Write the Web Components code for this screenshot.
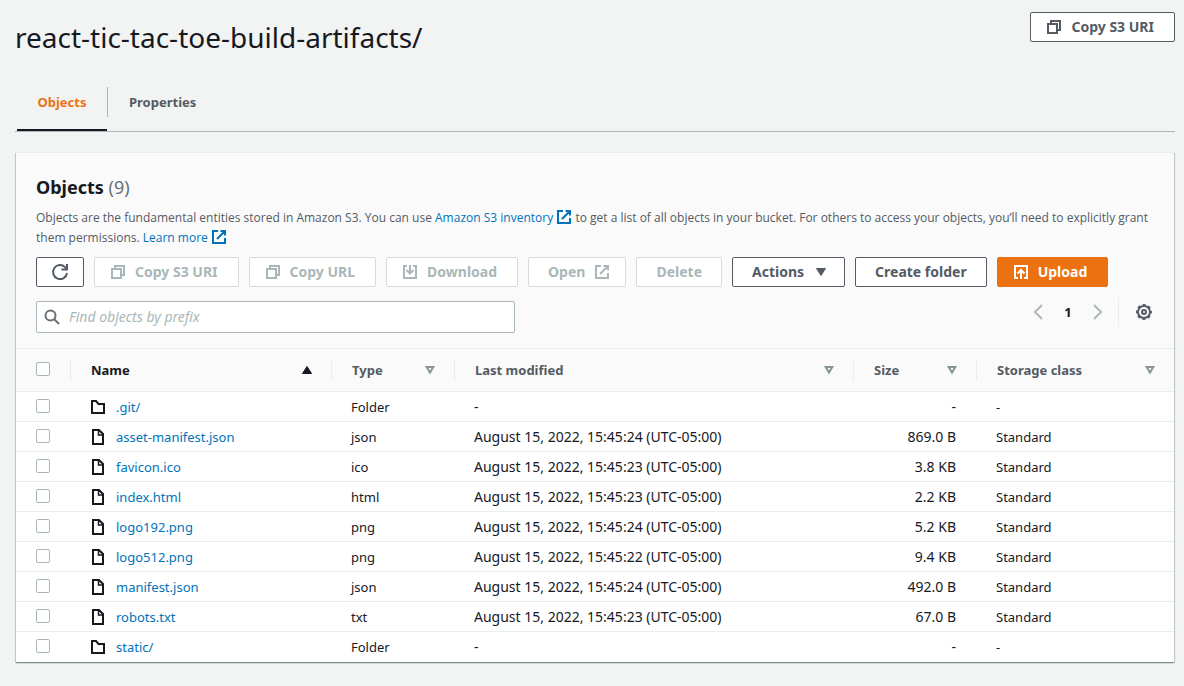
<!DOCTYPE html>
<html lang="en">
<head>
<meta charset="utf-8">
<meta name="viewport" content="width=device-width, initial-scale=1">
<title>react-tic-tac-toe-build-artifacts/</title>
<style>
  body {
    margin: 0;
    background: #f2f3f3;
    color: #16191f;
    font: 13px/20px "Noto Sans", "Open Sans", sans-serif;
    --link: #0073bb;
    --muted: #545b64;
    --line: #eaeded;
    --disabled: #aab7b8;
  }
</style>
</head>
<body>
<s3-folder-page></s3-folder-page>

<script>
const ICONS = {
  copy: '<path d="M2 5h9v9H2z"/><path d="M5 5V2h9v9h-3"/>',
  external: '<path d="M9.500 2H14v4.500M6 10l8-8M14 9v5H2V2h5"/>',
  refresh: '<path d="M15 9a7 7 0 1 1-2-5.900l2 1.900"/><path d="M15 0v5.500H9.500"/>',
  download: '<path d="M5 2H2v12h12V2h-3M8 1v8M4.500 6L8 9.500 11.500 6"/>',
  upload: '<path d="M5 14H2V2h12v12h-3M8 15V6M4.500 9.500L8 6l3.500 3.500"/>',
  caret: '<path d="M3.500 4.500h9L8 11.500z" fill="currentColor" stroke-width="1" stroke-linejoin="round"/>',
  search: '<circle cx="6.500" cy="6.500" r="5"/><path d="M10 10l5 5"/>',
  prev: '<path d="M12 1L5 8l7 7"/>',
  next: '<path d="M4 1l7 7-7 7"/>',
  gear: '<circle cx="8" cy="8" r="6"/><circle cx="8" cy="8" r="2"/><circle cx="8" cy="8" r="7.200" stroke-width="1.600" stroke-dasharray="3 2.655" stroke-dashoffset="1.500"/>',
  sorted: '<path d="M3.500 11.500h9L8 4.500z" fill="currentColor" stroke-width="1" stroke-linejoin="round"/>',
  sortable: '<path d="M4.700 5h6.600L8 10.500z" stroke-linejoin="miter"/>',
  file: '<path d="M3 1h6l4 4v10H3z"/><path d="M8.500 1v5H13" stroke-width="1.500"/>',
  folder: '<path d="M2 14V2h4l2.500 3H14v9z"/>'
};

class S3Icon extends HTMLElement {
  connectedCallback() {
    const root = this.shadowRoot || this.attachShadow({ mode: 'open' });
    root.innerHTML = `
      <style>
        :host { display: inline-block; flex: none; width: 16px; height: 16px; }
        svg { display: block; width: 100%; height: 100%; fill: none; stroke: currentColor; stroke-width: 2; overflow: visible; }
      </style>
      <svg viewBox="0 0 16 16" aria-hidden="true">${ICONS[this.getAttribute('name')]}</svg>`;
  }
}
customElements.define('s3-icon', S3Icon);

class S3Button extends HTMLElement {
  connectedCallback() {
    const root = this.shadowRoot || this.attachShadow({ mode: 'open' });
    const icon = this.getAttribute('icon');
    const iconEnd = this.getAttribute('icon-end');
    const label = this.getAttribute('label');
    root.innerHTML = `
      <style>
        :host { display: inline-block; flex: none; }
        button {
          box-sizing: border-box; display: flex; align-items: center; justify-content: center;
          gap: 9px; height: 30px; margin: 0; padding: 0 19px; white-space: nowrap;
          border: 1px solid var(--muted); border-radius: 2px; background: #fff;
          color: var(--muted); font: inherit; font-size: 14px; font-weight: 700; cursor: pointer;
        }
        .lead { padding: 0 20px 0 15px; }
        .trail { padding-right: 15px; }
        .only { padding: 0 15px; }
        button:disabled { color: var(--disabled); border-color: #d5dbdb; cursor: default; }
        :host([variant="primary"]) button { background: #ec7211; border-color: #ec7211; color: #fff; }
      </style>
      <button type="button" class="${label ? 'only' : icon ? 'lead' : iconEnd ? 'trail' : ''}"
        ${label ? `aria-label="${label}"` : ''} ${this.hasAttribute('disabled') ? 'disabled' : ''}>
        ${icon ? `<s3-icon name="${icon}"></s3-icon>` : ''}${label ? '' : '<slot></slot>'}${iconEnd ? `<s3-icon name="${iconEnd}"></s3-icon>` : ''}
      </button>`;
  }
}
customElements.define('s3-button', S3Button);

class S3Link extends HTMLElement {
  connectedCallback() {
    const root = this.shadowRoot || this.attachShadow({ mode: 'open' });
    root.innerHTML = `
      <style>
        :host { display: inline; }
        a { color: var(--link); text-decoration: none; }
        a:hover { text-decoration: underline; }
        s3-icon { vertical-align: -3px; }
      </style>
      <a href="${this.getAttribute('href') || '#'}"><slot></slot>${this.hasAttribute('external') ? ' <s3-icon name="external"></s3-icon>' : ''}</a>`;
  }
}
customElements.define('s3-link', S3Link);

class S3Tabs extends HTMLElement {
  connectedCallback() {
    const root = this.shadowRoot || this.attachShadow({ mode: 'open' });
    root.innerHTML = `
      <style>
        :host { display: block; border-bottom: 1px solid var(--disabled); }
        div { display: flex; padding-left: 2px; }
        button {
          height: 44px; margin: 0; padding: 0 20px 12px; border: 0; border-bottom: 2px solid transparent;
          background: none; color: var(--muted); font: inherit; font-weight: 700; cursor: pointer;
        }
        button[aria-selected="true"] { min-width: 90px; color: #ec7211; border-bottom-color: #16191f; }
        i { width: 1px; height: 30px; margin-right: 1px; background: var(--disabled); }
      </style>
      <div role="tablist">
        <button type="button" role="tab" aria-selected="true">Objects</button><i></i>
        <button type="button" role="tab" aria-selected="false">Properties</button>
      </div>`;
  }
}
customElements.define('s3-tabs', S3Tabs);

class S3Search extends HTMLElement {
  connectedCallback() {
    const root = this.shadowRoot || this.attachShadow({ mode: 'open' });
    root.innerHTML = `
      <style>
        :host { display: block; }
        label {
          box-sizing: border-box; display: flex; align-items: center; gap: 9px; height: 32px; padding: 0 7px;
          border: 1px solid var(--disabled); border-radius: 2px; background: #fff; color: #687078;
        }
        input { flex: 1; min-width: 0; padding: 0; border: 0; outline: 0; background: none; color: #16191f; font: inherit; font-size: 14px; }
        input::placeholder { color: var(--disabled); font-style: italic; opacity: 1; }
      </style>
      <label><s3-icon name="search"></s3-icon><input type="search" placeholder="Find objects by prefix" aria-label="Find objects by prefix"></label>`;
  }
}
customElements.define('s3-search', S3Search);

class S3Pagination extends HTMLElement {
  connectedCallback() {
    const root = this.shadowRoot || this.attachShadow({ mode: 'open' });
    root.innerHTML = `
      <style>
        :host { display: flex; align-items: center; height: 30px; }
        button { display: flex; justify-content: center; margin: 0; padding: 0; width: 30px; border: 0; background: none; color: var(--muted); font: inherit; cursor: pointer; }
        button:disabled { color: var(--disabled); }
        .page { color: #16191f; font-weight: 700; }
        .settings { justify-content: flex-start; margin-left: 5px; padding-left: 17px; width: 36px; height: 30px; align-items: center; border-left: 1px solid var(--line); }
      </style>
      <button type="button" disabled aria-label="Previous page"><s3-icon name="prev"></s3-icon></button>
      <button type="button" class="page" aria-current="page">1</button>
      <button type="button" disabled aria-label="Next page"><s3-icon name="next"></s3-icon></button>
      <button type="button" class="settings" aria-label="Preferences"><s3-icon name="gear"></s3-icon></button>`;
  }
}
customElements.define('s3-pagination', S3Pagination);

class S3ObjectsTable extends HTMLElement {
  connectedCallback() {
    const root = this.shadowRoot || this.attachShadow({ mode: 'open' });
    const stamp = s => `August 15, 2022, 15:45:${s} (UTC-05:00)`;
    const rows = [
      ['.git/', 'Folder', '-', '-', '-'],
      ['asset-manifest.json', 'json', stamp(24), '869.0 B', 'Standard'],
      ['favicon.ico', 'ico', stamp(23), '3.8 KB', 'Standard'],
      ['index.html', 'html', stamp(23), '2.2 KB', 'Standard'],
      ['logo192.png', 'png', stamp(24), '5.2 KB', 'Standard'],
      ['logo512.png', 'png', stamp(22), '9.4 KB', 'Standard'],
      ['manifest.json', 'json', stamp(24), '492.0 B', 'Standard'],
      ['robots.txt', 'txt', stamp(23), '67.0 B', 'Standard'],
      ['static/', 'Folder', '-', '-', '-']
    ];
    const heads = ['Name', 'Type', 'Last modified', 'Size', 'Storage class'];
    root.innerHTML = `
      <style>
        :host { display: block; }
        table { width: 100%; table-layout: fixed; border-collapse: separate; border-spacing: 0; }
        .check { width: 55px; } .name { width: 261px; } .short { width: 123px; } .class { width: 197px; }
        th { height: 42px; padding: 0; background: #fafafa; border-bottom: 1px solid var(--line); color: var(--muted); text-align: left; }
        th > div { box-sizing: border-box; display: flex; align-items: center; justify-content: space-between; height: 22px; padding: 0 16px 0 20px; border-right: 1px solid var(--line); }
        th:last-child > div { border-right: 0; }
        th[aria-sort] { color: #16191f; }
        th s3-icon { color: #879596; }
        th[aria-sort] s3-icon { color: #16191f; }
        td { height: 29px; padding: 0 20px; background: #fff; border-bottom: 1px solid var(--line); white-space: nowrap; }
        td + td { padding: 0 21px 0 19px; }
        tr:last-child td { border-bottom-color: #fff; }
        .figure { font-size: 14px; }
        .size { text-align: right; }
        .object { display: flex; align-items: center; gap: 10px; }
        input { appearance: none; box-sizing: border-box; display: block; width: 14px; height: 14px; margin: 0 0 2px; border: 1px solid var(--disabled); border-radius: 2px; background: #fff; }
        input:checked { background: var(--link); }
      </style>
      <table>
        <colgroup><col class="check"><col class="name"><col class="short"><col><col class="short"><col class="class"></colgroup>
        <thead><tr>
          <th scope="col"><div><input type="checkbox" aria-label="Select all objects"></div></th>
          ${heads.map((h, i) => `<th scope="col" ${i ? '' : 'aria-sort="ascending"'}><div>${h}<s3-icon name="${i ? 'sortable' : 'sorted'}"></s3-icon></div></th>`).join('')}
        </tr></thead>
        <tbody>${rows.map(([name, type, date, size, storage]) => `
          <tr>
            <td><input type="checkbox" aria-label="Select ${name}"></td>
            <td><div class="object"><s3-icon name="${type === 'Folder' ? 'folder' : 'file'}"></s3-icon><s3-link href="#${name}">${name}</s3-link></div></td>
            <td>${type}</td><td class="figure">${date}</td><td class="figure size">${size}</td><td>${storage}</td>
          </tr>`).join('')}
        </tbody>
      </table>`;
  }
}
customElements.define('s3-objects-table', S3ObjectsTable);

class S3Panel extends HTMLElement {
  connectedCallback() {
    const root = this.shadowRoot || this.attachShadow({ mode: 'open' });
    root.innerHTML = `
      <style>
        :host { display: block; background: #fff; border-top: 1px solid var(--line); box-shadow: 0 1px 1px 0 rgba(0,28,36,.3), 1px 1px 1px 0 rgba(0,28,36,.15), -1px 1px 1px 0 rgba(0,28,36,.15); }
        header { padding: 20px 20px 15px; background: #fafafa; border-bottom: 1px solid var(--line); }
      </style>
      <header><slot name="header"></slot></header>
      <slot></slot>`;
  }
}
customElements.define('s3-panel', S3Panel);

class S3FolderPage extends HTMLElement {
  connectedCallback() {
    const root = this.shadowRoot || this.attachShadow({ mode: 'open' });
    root.innerHTML = `
      <style>
        :host { display: block; padding: 12px 9px 24px 15px; }
        .title { display: flex; align-items: flex-start; justify-content: space-between; height: 75px; }
        h1 { margin: 7px 0 0; font-size: 28px; line-height: 36px; font-weight: 400; }
        s3-panel { margin: 20px 1px 0; }
        h2 { margin: 0; font-size: 18px; line-height: 28px; font-weight: 700; }
        h2 span { color: #687078; font-weight: 400; }
        p { margin: 7px 0 9px; color: var(--muted); font-family: "Open Sans", "Noto Sans", sans-serif; font-size: 12px; line-height: 20px; }
        .actions { display: flex; flex-wrap: wrap; gap: 10px; }
        .filter { display: flex; align-items: flex-start; justify-content: space-between; padding-top: 10px; }
        s3-search { flex: 0 1 479px; margin-top: 4px; }
      </style>
      <div class="title"><h1>react-tic-tac-toe-build-artifacts/</h1><s3-button icon="copy">Copy S3 URI</s3-button></div>
      <s3-tabs></s3-tabs>
      <s3-panel>
        <div slot="header">
          <h2>Objects <span>(9)</span></h2>
          <p>Objects are the fundamental entities stored in Amazon S3. You can use <s3-link external>Amazon S3 inventory</s3-link> to get a list of all objects in your bucket. For others to access your objects, you’ll need to explicitly grant <span>them permissions.</span> <s3-link external>Learn more</s3-link></p>
          <div class="actions">
            <s3-button icon="refresh" label="Refresh"></s3-button>
            <s3-button icon="copy" disabled>Copy S3 URI</s3-button>
            <s3-button icon="copy" disabled>Copy URL</s3-button>
            <s3-button icon="download" disabled>Download</s3-button>
            <s3-button icon-end="external" disabled>Open</s3-button>
            <s3-button disabled>Delete</s3-button>
            <s3-button icon-end="caret">Actions</s3-button>
            <s3-button>Create folder</s3-button>
            <s3-button icon="upload" variant="primary">Upload</s3-button>
          </div>
          <div class="filter"><s3-search></s3-search><s3-pagination></s3-pagination></div>
        </div>
        <s3-objects-table></s3-objects-table>
      </s3-panel>`;
  }
}
customElements.define('s3-folder-page', S3FolderPage);
</script>
</body>
</html>
